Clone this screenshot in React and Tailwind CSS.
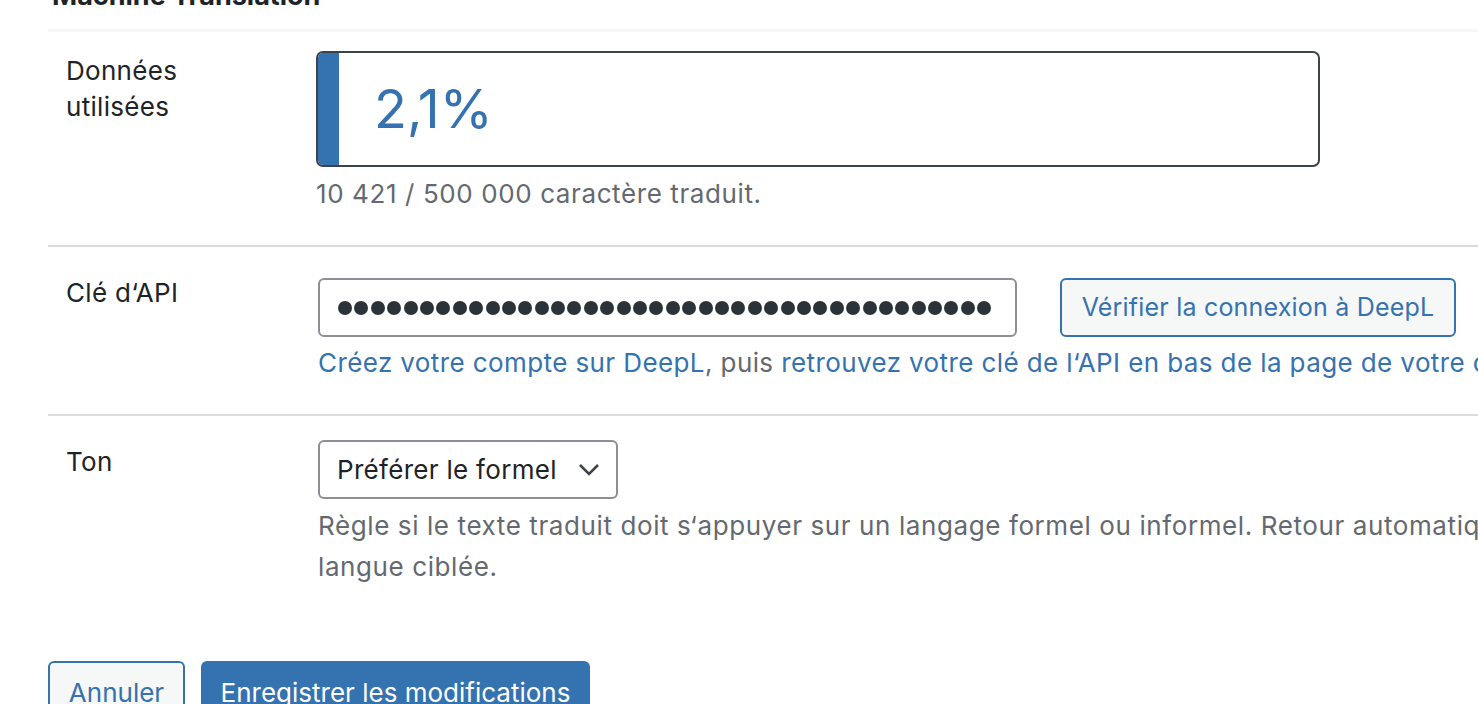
const DOTS = Array.from({ length: 40 });

export default function App() {
  return (
    <div
      className="relative h-[704px] w-[1478px] overflow-hidden bg-white text-[#1d2327]"
      style={{ fontFamily: "Inter, 'Noto Sans', sans-serif" }}
    >
      {/* Section heading, cut off at the top */}
      <div className="-mt-[22px] pl-[52px]">
        <h2 className="text-[27px] font-bold leading-[36px] text-[#1d2327]">Machine Translation</h2>
      </div>

      <div className="ml-[48px] mt-[15px]">
        <div className="h-[3px] bg-[#f6f7f7]" />

        {/* Données utilisées */}
        <div className="flex border-b-2 border-[#dcdcde] pb-[33px] pt-[19px]">
          <div className="w-[268px] pl-[18px] pt-[2px] text-[26px] leading-[36px] tracking-[0.3px]">
            Données
            <br />
            utilisées
          </div>
          <div>
            <div className="flex h-[116px] w-[1004px] items-center overflow-hidden rounded-[7px] border-2 border-[#3c434a]">
              <div className="h-full w-[21px] bg-[#3572b0]" />
              <span className="ml-[35px] text-[54px] leading-none text-[#3572b0]">2,1%</span>
            </div>
            <p className="mt-[9px] text-[26px] leading-[36px] tracking-[0.6px] text-[#646970]">
              10 421 / 500 000 caractère traduit.
            </p>
          </div>
        </div>

        {/* Clé d'API */}
        <div className="flex border-b-2 border-[#dcdcde] pb-[33px] pt-[31px]">
          <div className="w-[270px] shrink-0 pl-[18px] text-[26px] leading-[30px] tracking-[0.3px]">Clé d‘API</div>
          <div className="min-w-0">
            <div className="flex items-center">
              <div
                aria-label="••••••••"
                className="flex h-[59px] w-[699px] items-center gap-[2.4px] overflow-hidden rounded-[6px] border-2 border-[#8c8f94] pl-[18px]"
              >
                {DOTS.map((_, i) => (
                  <span key={i} className="h-[14px] w-[14px] shrink-0 rounded-full bg-[#2c3338]" />
                ))}
              </div>
              <button className="ml-[43px] h-[59px] w-[396px] rounded-[6px] border-2 border-[#3572b0] bg-[#f6f7f7] text-[25px] tracking-[0.2px] text-[#3572b0]">
                Vérifier la connexion à DeepL
              </button>
            </div>
            <p className="mt-[8px] whitespace-nowrap text-[26px] leading-[36px] tracking-[0.4px] text-[#646970]">
              <span className="text-[#3572b0]">Créez votre compte sur DeepL</span>, puis{" "}
              <span className="text-[#3572b0]">retrouvez votre clé de l‘API en bas de la page de votre compte DeepL.</span>
            </p>
          </div>
        </div>

        {/* Ton */}
        <div className="flex pb-[74px] pt-[24px]">
          <div className="w-[270px] shrink-0 pl-[18px] pt-[4px] text-[26px] leading-[36px] tracking-[0.3px]">Ton</div>
          <div className="min-w-0">
            <div className="flex h-[59px] w-[300px] items-center justify-between rounded-[6px] border-2 border-[#8c8f94] pl-[17px] pr-[16px] text-[26px] tracking-[0.3px]">
              <span>Préférer le formel</span>
              <svg width="22" height="14" viewBox="0 0 22 14" fill="none" stroke="#3c434a" strokeWidth="2.5">
                <path d="M2 2l9 9 9-9" />
              </svg>
            </div>
            <p className="mt-[6px] whitespace-nowrap text-[26px] leading-[41px] tracking-[0.6px] text-[#646970]">
              Règle si le texte traduit doit s‘appuyer sur un langage formel ou informel. Retour automatique au formel si non pris en charge par la
              <br />
              langue ciblée.
            </p>
          </div>
        </div>

        {/* Buttons */}
        <div className="flex gap-[16px]">
          <button className="h-[60px] w-[137px] rounded-[6px] border-2 border-[#3572b0] bg-[#f6f7f7] pt-[2px] text-[26px] text-[#3572b0]">
            Annuler
          </button>
          <button className="h-[60px] w-[389px] rounded-[6px] bg-[#3572b0] pt-[2px] text-[26px] text-white">
            Enregistrer les modifications
          </button>
        </div>
      </div>
    </div>
  );
}
